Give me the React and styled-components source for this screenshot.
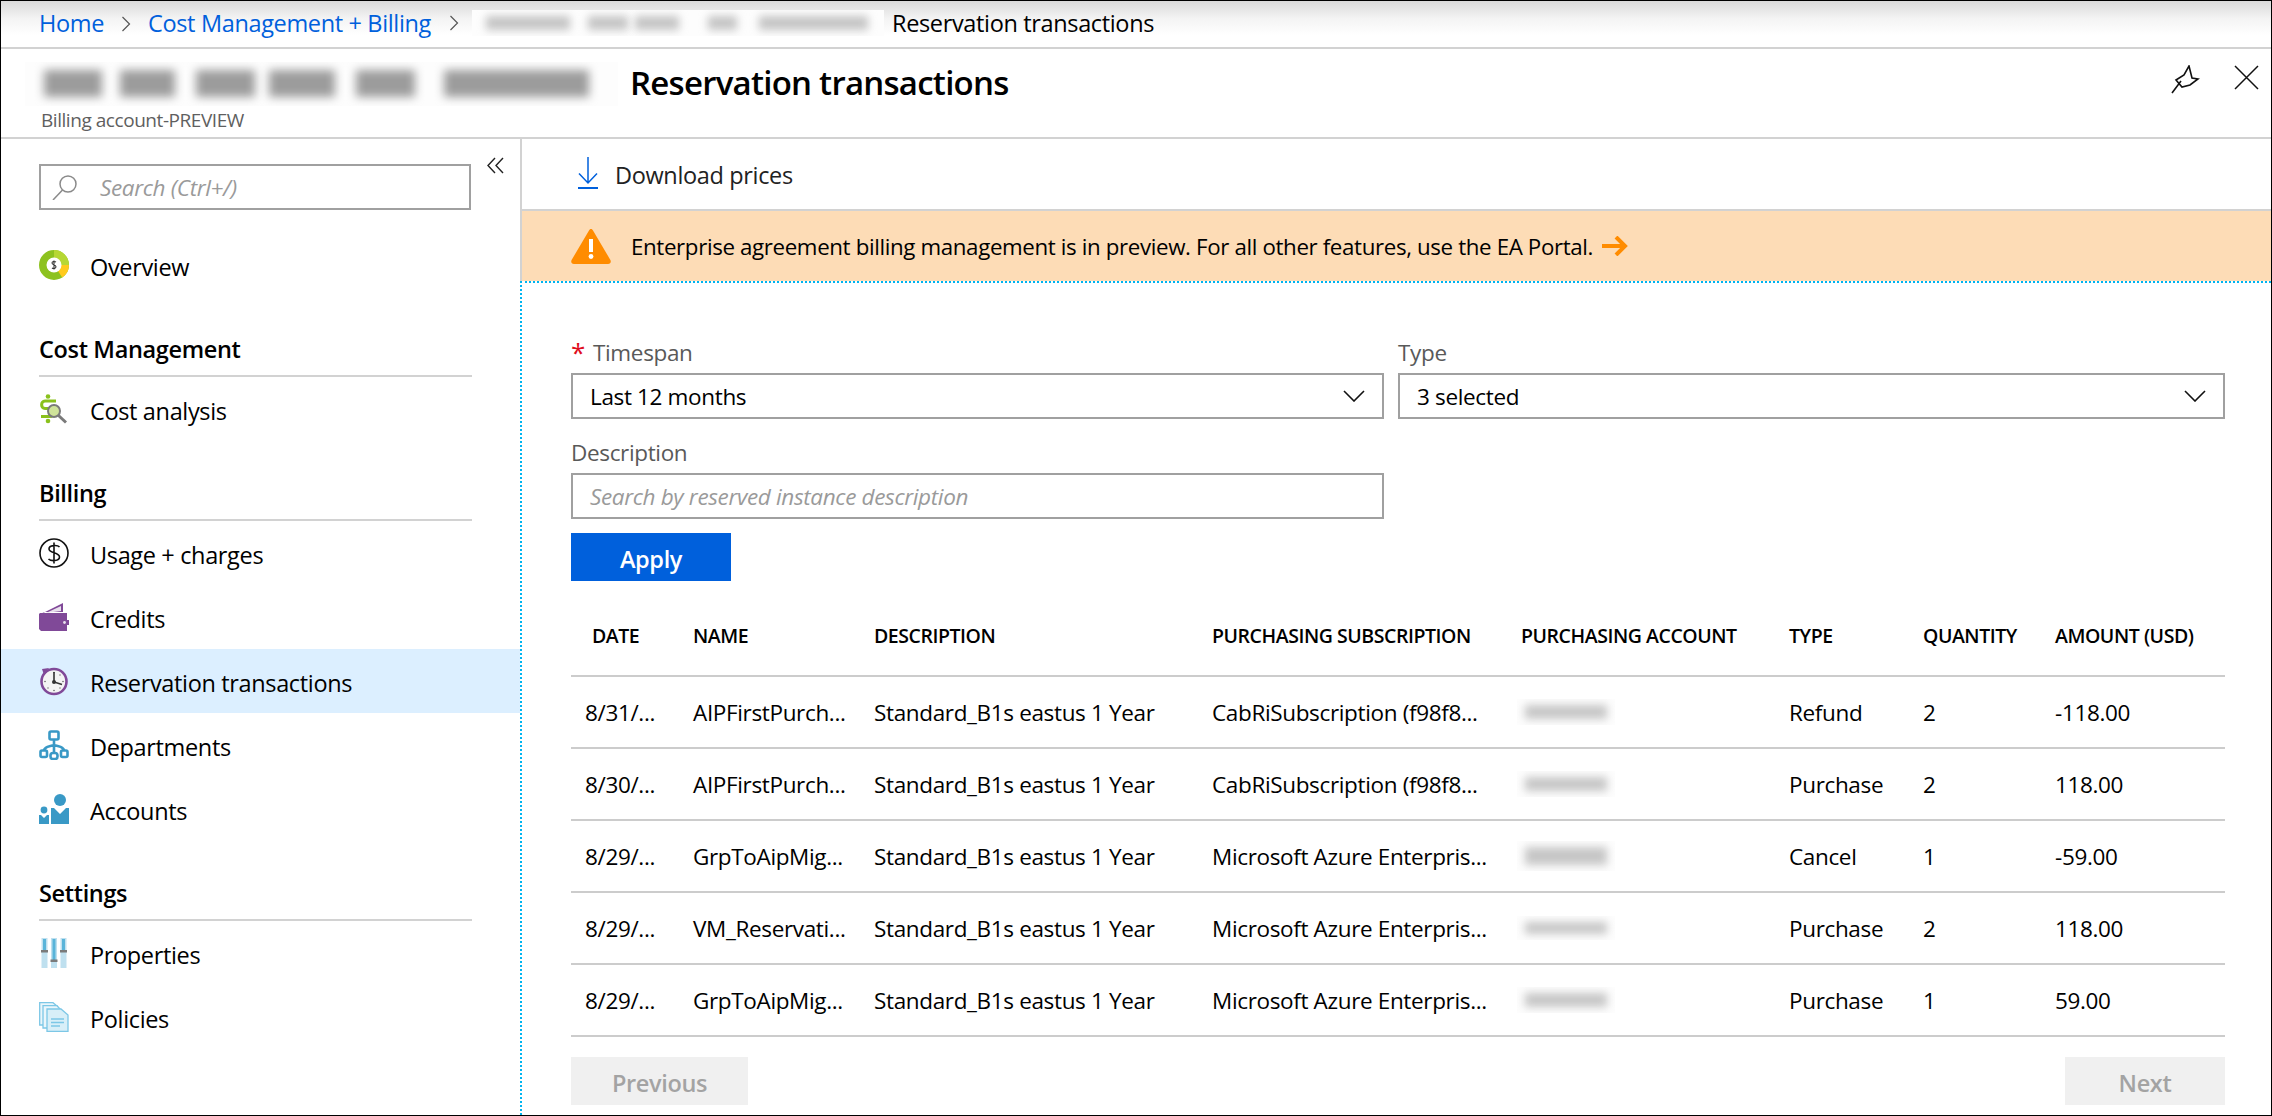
import React from 'react'
import styled, { createGlobalStyle } from 'styled-components'

const GlobalStyle = createGlobalStyle`
  html, body {
    margin: 0;
    padding: 0;
    background: #fff;
  }
  * {
    box-sizing: border-box;
  }
`

const FONT = '"Open Sans", "Noto Sans", sans-serif'
const RULE = '#d2d2d2'
const BLUE = '#0060dc'

const Frame = styled.div`
  width: 2272px;
  height: 1116px;
  border: 1px solid #000;
  overflow: hidden;
  display: flex;
  flex-direction: column;
  font-family: ${FONT};
  font-size: 23.5px;
  letter-spacing: -0.35px;
  color: #000;
  background: #fff;
`

const Breadcrumb = styled.div`
  height: 48px;
  flex: none;
  display: flex;
  align-items: center;
  padding: 0 0 3px 38px;
  border-bottom: 2px solid ${RULE};
  background: linear-gradient(#dadada 0, #f4f4f4 18px, #fff 34px);
`

const Crumb = styled.a`
  color: ${BLUE};
  text-decoration: none;
`

const CrumbChevron = styled.svg`
  width: 10px;
  height: 16px;
  margin: ${p => p.$margin};
  flex: none;
`

const CurrentCrumb = styled.span`
  margin-left: 8px;
`

const BlurStrip = styled.div`
  display: flex;
  align-items: center;
  flex: none;
  width: ${p => p.$w}px;
  height: ${p => p.$h}px;
  padding-left: ${p => p.$pad}px;
  overflow: hidden;
  background: #fdfdfd;
`

const Blob = styled.div`
  flex: none;
  width: ${p => p.$w}px;
  height: ${p => p.$h}px;
  margin-left: ${p => p.$ml || 0}px;
  background: ${p => p.$color};
  filter: blur(${p => p.$blur}px);
`

const TitleBar = styled.div`
  height: 90px;
  flex: none;
  display: flex;
  justify-content: space-between;
  border-bottom: 2px solid ${RULE};
  padding: 11px 12px 0 24px;
`

const TitleBlock = styled.div`
  display: flex;
  flex-direction: column;
`

const TitleRow = styled.div`
  display: flex;
  align-items: center;
  gap: 12px;
`

const Title = styled.h1`
  margin: 0 0 2px;
  font-size: 33px;
  font-weight: 600;
  letter-spacing: -0.75px;
`

const Subtitle = styled.div`
  margin: 0 0 0 16px;
  font-size: 19px;
  line-height: 26px;
  letter-spacing: -0.45px;
  color: #5f5f5f;
`

const Actions = styled.div`
  display: flex;
  gap: 33px;
  padding-top: 5px;
`

const Body = styled.div`
  flex: 1;
  display: flex;
  min-height: 0;
`

const Sidebar = styled.nav`
  width: 519px;
  flex: none;
`

const SearchRow = styled.div`
  display: flex;
  align-items: flex-start;
  gap: 16px;
  padding: 18px 0 0 38px;
`

const SearchBox = styled.div`
  width: 432px;
  height: 46px;
  margin-top: 7px;
  margin-bottom: 23px;
  display: flex;
  align-items: center;
  gap: 22px;
  padding-left: 11px;
  border: 2px solid #a0a0a0;
  color: #9a9a9a;
  font-style: italic;
  font-size: 22.5px;
`

const NavRow = styled.a`
  height: 64px;
  display: flex;
  align-items: center;
  gap: 21px;
  padding-left: 38px;
  background: ${p => (p.$active ? '#dcefff' : 'transparent')};
`

const NavLabel = styled.span`
  padding-top: 3px;
`

const NavIcon = styled.svg`
  width: 30px;
  height: 30px;
  flex: none;
  display: block;
`

const SectionHead = styled.div`
  height: 80px;
  margin: 0 48px 0 38px;
  display: flex;
  align-items: flex-end;
  padding-bottom: 11px;
  border-bottom: 2px solid ${RULE};
  font-weight: 600;
  line-height: 30px;
`

const Main = styled.main`
  flex: 1;
  min-width: 0;
  display: flex;
  flex-direction: column;
`

const Toolbar = styled.div`
  height: 72px;
  flex: none;
  display: flex;
  align-items: center;
  gap: 17px;
  padding: 0 0 2px 56px;
  border-left: 2px solid ${RULE};
  border-bottom: 2px solid ${RULE};
`

const ToolLabel = styled.span`
  padding-top: 4px;
  color: #222;
`

const Banner = styled.div`
  height: 70px;
  flex: none;
  display: flex;
  align-items: center;
  padding-left: 49px;
  border-left: 2px solid ${RULE};
  background: #fddcb6;
`

const BannerText = styled.span`
  margin-left: 20px;
  font-size: 22.3px;
  letter-spacing: -0.36px;
`

const BannerArrow = styled.svg`
  width: 26px;
  height: 20px;
  margin-left: 9px;
`

const Panel = styled.section`
  flex: 1;
  min-height: 0;
  padding: 54px 46px 0 49px;
  border-left: 2px dotted #00b4ef;
  border-top: 2px dotted #00b4ef;
`

const FormGrid = styled.div`
  display: grid;
  grid-template-columns: 813px 827px;
  column-gap: 14px;
`

const Field = styled.div`
  display: flex;
  flex-direction: column;
`

const Label = styled.label`
  height: 30px;
  margin-bottom: 6px;
  display: flex;
  align-items: center;
  color: #595959;
  font-size: 22.5px;
`

const Star = styled.span`
  width: 22px;
  color: #e00b1c;
  font-size: 26px;
  line-height: 30px;
`

const SelectBox = styled.div`
  height: 46px;
  display: flex;
  align-items: center;
  justify-content: space-between;
  padding: 0 17px 0 17px;
  border: 2px solid #a0a0a0;
  font-size: 22.5px;
`

const InputBox = styled(SelectBox)`
  margin-bottom: 14px;
  color: #9a9a9a;
  font-style: italic;
`

const SelectChevron = styled.svg`
  width: 22px;
  height: 12px;
  flex: none;
`

const DescriptionField = styled(Field)`
  margin-top: 18px;
`

const ApplyButton = styled.button`
  display: block;
  width: 160px;
  height: 48px;
  padding: 4px 0 0;
  border: 0;
  background: ${BLUE};
  color: #fff;
  font-family: ${FONT};
  font-size: 23.5px;
  font-weight: 600;
  letter-spacing: -0.35px;
`

const Table = styled.div`
  margin-top: 15px;
`

const Row = styled.div`
  display: grid;
  grid-template-columns: 122px 181px 338px 309px 268px 134px 132px 170px;
  align-items: center;
  height: ${p => (p.$head ? 81 : 72)}px;
  border-bottom: 2px solid #cccccc;
  font-size: ${p => (p.$head ? '19.5px' : '22.5px')};
  font-weight: ${p => (p.$head ? 600 : 400)};
  letter-spacing: ${p => (p.$head ? '-0.45px' : '-0.35px')};
  white-space: nowrap;
`

const DateHead = styled.span`
  padding-left: 21px;
`

const DateCell = styled.span`
  padding-left: 14px;
`

const AccountCell = styled.div`
  margin-left: -4px;
`

const Pager = styled.div`
  display: flex;
  justify-content: space-between;
  margin-top: 20px;
`

const PagerButton = styled.button`
  width: ${p => p.$w}px;
  height: 48px;
  padding: 4px 0 0;
  border: 0;
  background: #f0f0f0;
  color: #a3a3a3;
  font-family: ${FONT};
  font-size: 23.5px;
  font-weight: 600;
  letter-spacing: -0.35px;
`

const breadcrumbBlobs = [
  [84, 14], [40, 18], [44, 7], [29, 29], [109, 22],
]

const titleBlobs = [
  [58, 19], [55, 18], [59, 21], [66, 14], [59, 21], [145, 29],
]

const rows = [
  { date: '8/31/...', name: 'AIPFirstPurch...', sub: 'CabRiSubscription (f98f8...', type: 'Refund', qty: 2, amount: '-118.00', blur: 14 },
  { date: '8/30/...', name: 'AIPFirstPurch...', sub: 'CabRiSubscription (f98f8...', type: 'Purchase', qty: 2, amount: '118.00', blur: 14 },
  { date: '8/29/...', name: 'GrpToAipMig...', sub: 'Microsoft Azure Enterpris...', type: 'Cancel', qty: 1, amount: '-59.00', blur: 18 },
  { date: '8/29/...', name: 'VM_Reservati...', sub: 'Microsoft Azure Enterpris...', type: 'Purchase', qty: 2, amount: '118.00', blur: 12 },
  { date: '8/29/...', name: 'GrpToAipMig...', sub: 'Microsoft Azure Enterpris...', type: 'Purchase', qty: 1, amount: '59.00', blur: 14 },
]

const Chevron = ({ margin }) => (
  <CrumbChevron $margin={margin} viewBox="0 0 10 16" fill="none" stroke="#555" strokeWidth="1.2">
    <path d="M1.5 1 L8.5 8 L1.5 15" />
  </CrumbChevron>
)

const DownChevron = () => (
  <SelectChevron viewBox="0 0 22 12" fill="none" stroke="#111" strokeWidth="1.6">
    <path d="M1 1 L11 11 L21 1" />
  </SelectChevron>
)

const OverviewIcon = () => (
  <NavIcon viewBox="0 0 30 30" fill="none">
    <circle cx="15" cy="15" r="11" stroke="#8dc21f" strokeWidth="8" />
    <path d="M15 4 A11 11 0 0 1 26 15" stroke="#b6d734" strokeWidth="8" />
    <path d="M26 15 A11 11 0 0 1 21 24.2" stroke="#ffca1c" strokeWidth="8" />
    <circle cx="15" cy="15" r="7.5" fill="#fff" />
    <path d="M17 12 C15.5 11 13 11.4 13 13 C13 15 17 14.6 17 16.8 C17 18.5 14.4 19 13 18 M15 10.4 V19.6" stroke="#333" strokeWidth="1.1" />
  </NavIcon>
)

const CostIcon = () => (
  <NavIcon viewBox="0 0 30 30" fill="none">
    <circle cx="9" cy="2.5" r="2.3" fill="#8ac11c" />
    <circle cx="9" cy="27" r="2.3" fill="#8ac11c" />
    <path d="M17 7 H6 C1.5 7 1.5 14.5 6 14.5 H11 C15.5 14.5 15.5 22.5 11 22.5 H2" stroke="#8ac11c" strokeWidth="3" />
    <circle cx="15" cy="17" r="6" fill="#cfe39a" stroke="#7a7a7a" strokeWidth="2" />
    <path d="M19.5 21.5 L27 28.5" stroke="#7a7a7a" strokeWidth="3" />
  </NavIcon>
)

const UsageIcon = () => (
  <NavIcon viewBox="0 0 30 30" fill="none" stroke="#111">
    <circle cx="15" cy="15" r="14" strokeWidth="1.6" />
    <path d="M20.5 9 C18.5 6.8 10 6.8 10 11 C10 15.5 20.5 14 20.5 19 C20.5 23.4 12 23.4 9.5 21 M15 4.5 V25.5" strokeWidth="1.6" />
  </NavIcon>
)

const CreditsIcon = () => (
  <NavIcon viewBox="0 0 30 30" fill="none">
    <path d="M2 12 L24 1 V10 H5 Z" fill="#804998" />
    <path d="M7 11 L22 4 V9 Z" fill="#e8e0ec" />
    <path d="M1 11 H28 V18 H30 V23 H28 V29 H2 L0 27 V12 Z" fill="#804998" />
    <circle cx="25.5" cy="20.5" r="1.4" fill="#e8e0ec" />
  </NavIcon>
)

const ClockIcon = () => (
  <NavIcon viewBox="0 0 30 30" fill="none">
    <circle cx="15" cy="15.5" r="12.5" fill="#f4f4f4" stroke="#804998" strokeWidth="2.6" />
    <path d="M3 3 L10 2 L5 9 Z" fill="#804998" />
    <circle cx="15" cy="6.5" r=".8" fill="#666" />
    <circle cx="15" cy="24.5" r=".8" fill="#666" />
    <circle cx="6" cy="15.5" r=".8" fill="#666" />
    <circle cx="24" cy="15.5" r=".8" fill="#666" />
    <circle cx="21" cy="9" r=".7" fill="#666" />
    <circle cx="21" cy="22" r=".7" fill="#666" />
    <circle cx="9" cy="22" r=".7" fill="#666" />
    <path d="M15 6 V16 L23 18.5" stroke="#333" strokeWidth="1.6" />
    <circle cx="15" cy="16" r="2" fill="#333" />
  </NavIcon>
)

const DepartmentsIcon = () => (
  <NavIcon viewBox="0 0 30 30" fill="none" stroke="#3999c6" strokeWidth="2.6">
    <rect x="10.5" y="1.5" width="9" height="8" rx="1.5" />
    <path d="M15 9.5 V23 M5 21 C5 17 9 17 15 15 C21 17 25 17 25 21" />
    <rect x="1.5" y="20.5" width="6.5" height="6.5" rx="1.5" />
    <rect x="11.5" y="23" width="7" height="6" rx="2.5" />
    <rect x="22" y="20.5" width="6.5" height="6.5" rx="1.5" />
  </NavIcon>
)

const AccountsIcon = () => (
  <NavIcon viewBox="0 0 30 30" fill="#3999c6">
    <circle cx="21" cy="6" r="6" />
    <path d="M12 14 H15 L21 20 L27 14 H30 V30 H12 Z" />
    <circle cx="5" cy="16" r="3.4" />
    <path d="M0 21 H2 L5 24 L8 21 H10 V30 H0 Z" />
  </NavIcon>
)

const PropertiesIcon = () => (
  <NavIcon viewBox="0 0 30 30">
    <rect x="2.5" y="0" width="6" height="30" fill="#bfe0ef" />
    <rect x="12" y="0" width="6" height="30" fill="#bfe0ef" />
    <rect x="21.5" y="0" width="6" height="30" fill="#bfe0ef" />
    <rect x="4" y="1" width="3" height="12" fill="#59b4d9" />
    <rect x="13.5" y="1" width="3" height="21" fill="#59b4d9" />
    <rect x="23" y="1" width="3" height="12" fill="#59b4d9" />
    <rect x="2" y="12" width="7" height="2.5" fill="#7a7a7a" />
    <rect x="11.5" y="21.5" width="7" height="2.5" fill="#7a7a7a" />
    <rect x="21" y="12" width="7" height="2.5" fill="#7a7a7a" />
  </NavIcon>
)

const PoliciesIcon = () => (
  <NavIcon viewBox="0 0 30 30" fill="#eaf6fb" stroke="#7cc7e6" strokeWidth="1.3">
    <path d="M.7 .7 H14 L18 4 V23 H.7 Z" />
    <path d="M4 3.7 H18 L21 7 V26 H4 Z" />
    <path d="M8 7 H22 L29 13 V29.3 H8 Z" fill="#d8eff8" />
    <path d="M12 17 H25 M12 20.5 H25 M12 24 H21" />
  </NavIcon>
)

const App = () => {
  return (
    <>
      <GlobalStyle />
      <Frame>
        <Breadcrumb>
          <Crumb>Home</Crumb>
          <Chevron margin="2px 17px 0 17px" />
          <Crumb>Cost Management + Billing</Crumb>
          <Chevron margin="0 13px 0 18px" />
          <BlurStrip $w={412} $h={26} $pad={14}>
            {breadcrumbBlobs.map(([w, ml], i) => (
              <Blob key={i} $w={w} $h={14} $ml={i ? ml : 0} $color="#c4c4c4" $blur={4} />
            ))}
          </BlurStrip>
          <CurrentCrumb>Reservation transactions</CurrentCrumb>
        </Breadcrumb>

        <TitleBar>
          <TitleBlock>
            <TitleRow>
              <BlurStrip $w={593} $h={44} $pad={0}>
                {titleBlobs.map(([w, ml], i) => (
                  <Blob key={i} $w={w} $h={27} $ml={ml} $color="#9c9c9c" $blur={5} />
                ))}
              </BlurStrip>
              <Title>Reservation transactions</Title>
            </TitleRow>
            <Subtitle>Billing account-PREVIEW</Subtitle>
          </TitleBlock>
          <Actions>
            <svg width="30" height="29" viewBox="0 0 30 29" fill="none" stroke="#111" strokeWidth="1.6">
              <path d="M1 28 L10 16 M18 1 L21 13 L27 14 L19 20 L11 22 L5 15 L13 10 Z" />
            </svg>
            <svg width="25" height="25" viewBox="0 0 25 25" fill="none" stroke="#111" strokeWidth="1.5">
              <path d="M1 1 L24 24 M24 1 L1 24" />
            </svg>
          </Actions>
        </TitleBar>

        <Body>
          <Sidebar>
            <SearchRow>
              <SearchBox>
                <svg width="26" height="25" viewBox="0 0 26 25" fill="none" stroke="#8a8a8a" strokeWidth="1.5">
                  <circle cx="16" cy="9" r="8" />
                  <path d="M10.5 15 L1 25" />
                </svg>
                Search (Ctrl+/)
              </SearchBox>
              <svg width="17" height="17" viewBox="0 0 17 17" fill="none" stroke="#222" strokeWidth="1.4">
                <path d="M8 1 L1 8.5 L8 16 M16 1 L9 8.5 L16 16" />
              </svg>
            </SearchRow>

            <NavRow><OverviewIcon /><NavLabel>Overview</NavLabel></NavRow>

            <SectionHead>Cost Management</SectionHead>
            <NavRow><CostIcon /><NavLabel>Cost analysis</NavLabel></NavRow>

            <SectionHead>Billing</SectionHead>
            <NavRow><UsageIcon /><NavLabel>Usage + charges</NavLabel></NavRow>
            <NavRow><CreditsIcon /><NavLabel>Credits</NavLabel></NavRow>
            <NavRow $active><ClockIcon /><NavLabel>Reservation transactions</NavLabel></NavRow>
            <NavRow><DepartmentsIcon /><NavLabel>Departments</NavLabel></NavRow>
            <NavRow><AccountsIcon /><NavLabel>Accounts</NavLabel></NavRow>

            <SectionHead>Settings</SectionHead>
            <NavRow><PropertiesIcon /><NavLabel>Properties</NavLabel></NavRow>
            <NavRow><PoliciesIcon /><NavLabel>Policies</NavLabel></NavRow>
          </Sidebar>

          <Main>
            <Toolbar>
              <svg width="20" height="32" viewBox="0 0 20 32" fill="none" stroke={BLUE} strokeWidth="1.5">
                <path d="M10 0 V26 M1 16.5 L10 26 L19 16.5" />
                <path d="M0 31 H20" strokeWidth="2" />
              </svg>
              <ToolLabel>Download prices</ToolLabel>
            </Toolbar>

            <Banner>
              <svg width="40" height="36" viewBox="0 0 40 36">
                <path d="M20 1 C21 1 21.6 1.6 22 2.5 L39.4 32 C40.4 34 39.4 36 37 36 H3 C.6 36 -.4 34 .6 32 L18 2.5 C18.4 1.6 19 1 20 1 Z" fill="#ff8c00" />
                <rect x="18" y="11" width="4" height="13" fill="#fff" />
                <circle cx="20" cy="28.5" r="2.4" fill="#fff" />
              </svg>
              <BannerText>Enterprise agreement billing management is in preview. For all other features, use the EA Portal.</BannerText>
              <BannerArrow viewBox="0 0 26 20" fill="none" stroke="#ff8c00" strokeWidth="4">
                <path d="M0 10 H22 M14 1 L23 10 L14 19" />
              </BannerArrow>
            </Banner>

            <Panel>
              <FormGrid>
                <Field>
                  <Label><Star>*</Star>Timespan</Label>
                  <SelectBox>Last 12 months<DownChevron /></SelectBox>
                </Field>
                <Field>
                  <Label>Type</Label>
                  <SelectBox>3 selected<DownChevron /></SelectBox>
                </Field>
                <DescriptionField>
                  <Label>Description</Label>
                  <InputBox>Search by reserved instance description</InputBox>
                </DescriptionField>
              </FormGrid>
              <ApplyButton>Apply</ApplyButton>

              <Table>
                <Row $head>
                  <DateHead>DATE</DateHead>
                  <span>NAME</span>
                  <span>DESCRIPTION</span>
                  <span>PURCHASING SUBSCRIPTION</span>
                  <span>PURCHASING ACCOUNT</span>
                  <span>TYPE</span>
                  <span>QUANTITY</span>
                  <span>AMOUNT (USD)</span>
                </Row>
                {rows.map((row, i) => (
                  <Row key={i}>
                    <DateCell>{row.date}</DateCell>
                    <span>{row.name}</span>
                    <span>Standard_B1s eastus 1 Year</span>
                    <span>{row.sub}</span>
                    <AccountCell>
                      <BlurStrip $w={98} $h={row.blur + 12} $pad={8}>
                        <Blob $w={82} $h={row.blur} $color="#c6c6c6" $blur={4} />
                      </BlurStrip>
                    </AccountCell>
                    <span>{row.type}</span>
                    <span>{row.qty}</span>
                    <span>{row.amount}</span>
                  </Row>
                ))}
              </Table>

              <Pager>
                <PagerButton $w={177}>Previous</PagerButton>
                <PagerButton $w={160}>Next</PagerButton>
              </Pager>
            </Panel>
          </Main>
        </Body>
      </Frame>
    </>
  )
}

export default App
